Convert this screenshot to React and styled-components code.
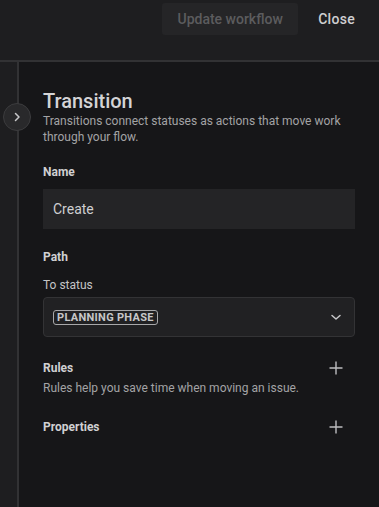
import { styled, createGlobalStyle } from 'styled-components'

const GlobalStyle = createGlobalStyle`
  html, body {
    margin: 0;
    padding: 0;
    background: #1e1e20;
    font-family: Roboto, "Noto Sans", "Liberation Sans", sans-serif;
    -webkit-font-smoothing: antialiased;
  }
`

const Page = styled.div`
  width: 379px;
  height: 507px;
  display: flex;
  flex-direction: column;
  background: #1e1e20;
  overflow: hidden;
`
const TopBar = styled.div`
  height: 62px;
  box-sizing: border-box;
  border-bottom: 2px solid #323234;
  display: flex;
  justify-content: flex-end;
  align-items: flex-start;
  padding: 3px 24px 0 0;
  gap: 10px;
`
const UpdateButton = styled.button`
  border: none;
  border-radius: 3px;
  background: #252527;
  color: #5c5c5e;
  font-family: inherit;
  font-size: 14px;
  font-weight: 500;
  height: 32px;
  width: 136px;
  padding: 0;
`
const CloseButton = styled.button`
  border: none;
  background: transparent;
  color: #cfcfd1;
  font-family: inherit;
  font-size: 14px;
  font-weight: 500;
  letter-spacing: 0.3px;
  height: 32px;
  padding: 0 0 0 10px;
`
const Body = styled.div`
  flex: 1;
  display: flex;
  position: relative;
`
const Gutter = styled.div`
  width: 17px;
  background: #1e1e20;
  border-right: 2px solid #323234;
`
const Panel = styled.div`
  flex: 1;
  background: #161618;
  padding: 27px 24px 0 24px;
  display: flex;
  flex-direction: column;
`
const ToggleButton = styled.div`
  position: absolute;
  left: 3px;
  top: 41px;
  width: 28px;
  height: 28px;
  box-sizing: border-box;
  border-radius: 50%;
  background: #29292b;
  border: 1px solid #3c3c3e;
  display: flex;
  align-items: center;
  justify-content: center;
`
const Title = styled.h1`
  margin: 0;
  font-size: 20px;
  font-weight: 500;
  color: #d4d4d6;
  line-height: 24px;
`
const Desc = styled.p`
  margin: ${p => p.$top || 0}px 0 0;
  font-size: 12px;
  line-height: 16px;
  color: #a3a3a5;
`
const Label = styled.div`
  margin-top: ${p => p.$top}px;
  font-size: 12px;
  font-weight: 700;
  color: #d0d0d2;
  line-height: 16px;
`
const SubLabel = styled.div`
  margin-top: ${p => p.$top}px;
  font-size: 12px;
  color: #c4c4c6;
  line-height: 16px;
`
const TextInput = styled.div`
  margin-top: 9px;
  height: 40px;
  background: #242426;
  display: flex;
  align-items: center;
  padding: 0 10px;
  font-size: 14px;
  color: #cfcfd1;
`
const Select = styled.div`
  margin-top: 4px;
  height: 40px;
  box-sizing: border-box;
  background: #212123;
  border: 1px solid #333335;
  border-radius: 4px;
  display: flex;
  align-items: center;
  justify-content: space-between;
  padding: 0 12px 0 9px;
`
const Badge = styled.span`
  border: 1px solid #a8a8aa;
  border-radius: 3px;
  padding: 0 3px;
  font-size: 11px;
  font-weight: 700;
  line-height: 13px;
  color: #c6c6c8;
  letter-spacing: 0.3px;
`
const SectionRow = styled.div`
  margin-top: ${p => p.$top}px;
  display: flex;
  justify-content: space-between;
  align-items: center;
  padding-right: 11px;
`

const Chevron = ({ dir }) => (
  <svg width="12" height="12" viewBox="0 0 12 12" fill="none">
    <path
      d={dir === 'right' ? 'M4.5 2.5 L8 6 L4.5 9.5' : 'M2 4.5 L6 8 L10 4.5'}
      stroke="#c8c8ca"
      strokeWidth="1.5"
      strokeLinecap="round"
      strokeLinejoin="round"
    />
  </svg>
)

const Plus = () => (
  <svg width="16" height="16" viewBox="0 0 16 16" fill="none">
    <path d="M8 1.5 V14.5 M1.5 8 H14.5" stroke="#bdbdbf" strokeWidth="1.4" />
  </svg>
)

const App = () => {
  return (
    <Page>
      <GlobalStyle />
      <TopBar>
        <UpdateButton>Update workflow</UpdateButton>
        <CloseButton>Close</CloseButton>
      </TopBar>
      <Body>
        <Gutter />
        <ToggleButton>
          <Chevron dir="right" />
        </ToggleButton>
        <Panel>
          <Title>Transition</Title>
          <Desc>Transitions connect statuses as actions that move work through your flow.</Desc>
          <Label $top={19}>Name</Label>
          <TextInput>Create</TextInput>
          <Label $top={20}>Path</Label>
          <SubLabel $top={12}>To status</SubLabel>
          <Select>
            <Badge>PLANNING PHASE</Badge>
            <Chevron dir="down" />
          </Select>
          <SectionRow $top={23}>
            <Label $top={0}>Rules</Label>
            <Plus />
          </SectionRow>
          <Desc $top={4}>Rules help you save time when moving an issue.</Desc>
          <SectionRow $top={23}>
            <Label $top={0}>Properties</Label>
            <Plus />
          </SectionRow>
        </Panel>
      </Body>
    </Page>
  )
}

export default App
